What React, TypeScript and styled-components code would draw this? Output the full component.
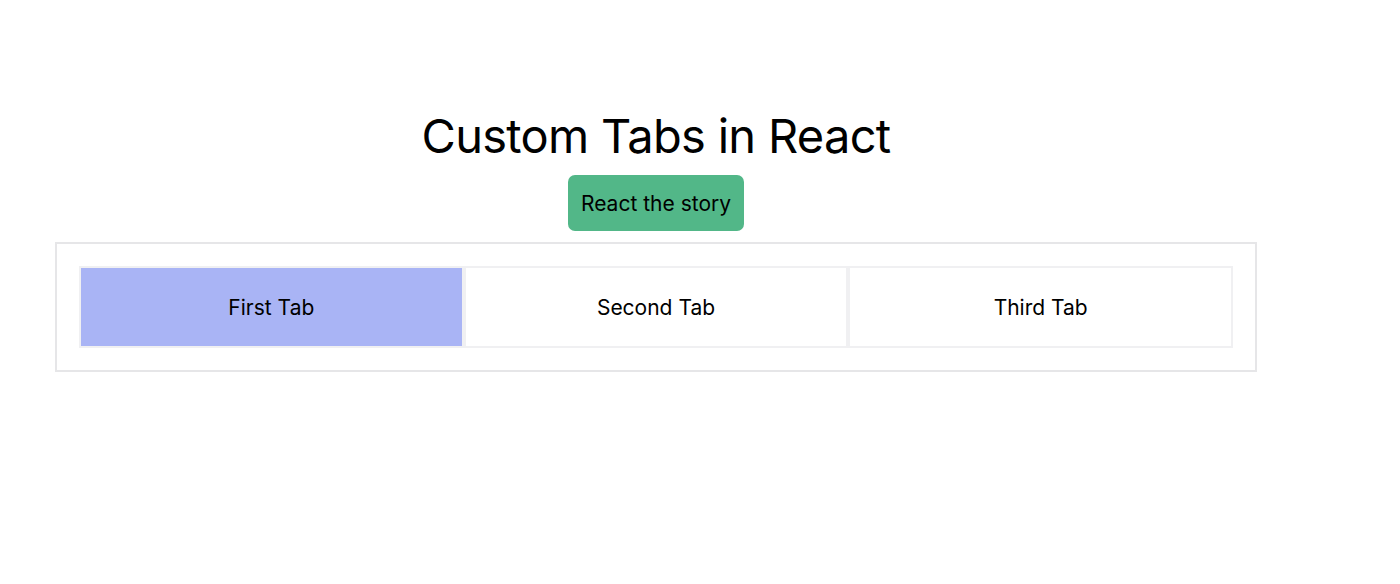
import React, { useState } from "react";
import styled, { createGlobalStyle } from "styled-components";

const GlobalStyle = createGlobalStyle`
  body {
    margin: 0;
    background: #ffffff;
    font-family: Inter, "Noto Sans", sans-serif;
    color: #000;
  }
`;

const Page = styled.div`
  display: flex;
  flex-direction: column;
  align-items: center;
  padding-top: 106px;
  width: 1312px;
`;

const Title = styled.h1`
  margin: 0;
  font-size: 47px;
  font-weight: 400;
  line-height: 60px;
  letter-spacing: -0.7px;
`;

const StoryButton = styled.button`
  margin-top: 9px;
  height: 56px;
  padding: 0 13px;
  border: none;
  border-radius: 7px;
  background: #52b788;
  color: #000;
  font-family: inherit;
  font-size: 21px;
  cursor: pointer;
`;

const TabBox = styled.div`
  box-sizing: border-box;
  margin-top: 11px;
  margin-left: 55px;
  align-self: flex-start;
  width: 1202px;
  padding: 22px;
  border: 2px solid #e6e6e8;
`;

const TabRow = styled.div`
  display: grid;
  grid-template-columns: repeat(3, 1fr);
`;

const Tab = styled.button<{ $active: boolean }>`
  height: 82px;
  padding-top: 2px;
  border: 2px solid #f0f0f2;
  background: ${(p) => (p.$active ? "#a9b4f5" : "#ffffff")};
  font-family: inherit;
  font-size: 21px;
  color: #000;
  cursor: pointer;
`;

const tabs = ["First Tab", "Second Tab", "Third Tab"];

export default function App() {
  const [active, setActive] = useState(0);
  return (
    <>
      <GlobalStyle />
      <Page>
        <Title>Custom Tabs in React</Title>
        <StoryButton>React the story</StoryButton>
        <TabBox>
          <TabRow>
            {tabs.map((t, i) => (
              <Tab key={t} $active={i === active} onClick={() => setActive(i)}>
                {t}
              </Tab>
            ))}
          </TabRow>
        </TabBox>
      </Page>
    </>
  );
}
